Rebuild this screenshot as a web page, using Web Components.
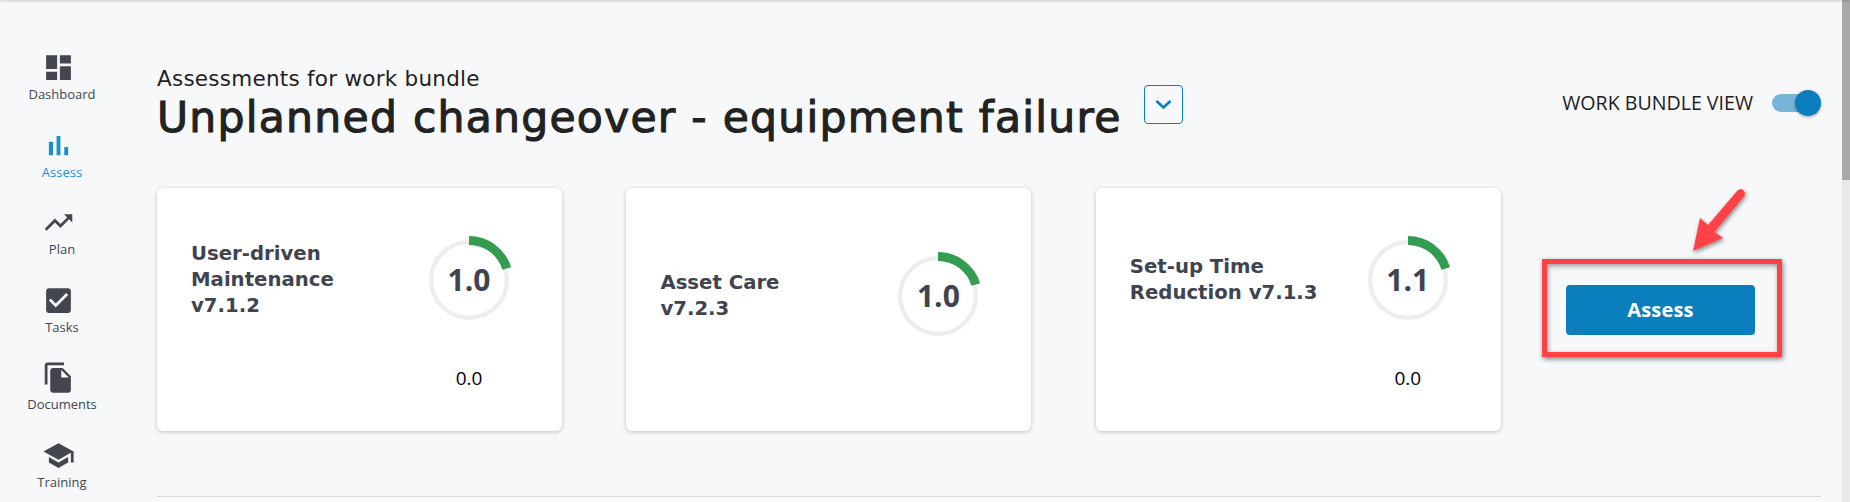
<!doctype html>
<html><head><meta charset="utf-8">
<style>
html,body{margin:0;padding:0;height:502px;overflow:hidden;background:#f7f8fa}
body{font-family:"Open Sans",sans-serif}
app-shell{height:502px}
</style></head>
<body>
<app-shell>
  <side-nav slot="nav">
    <nav-item label="Dashboard"><svg viewBox="0 0 24 24"><path d="M3 13h8V3H3v10zm0 8h8v-6H3v6zm10 0h8V11h-8v10zm0-18v6h8V3h-8z"/></svg></nav-item>
    <nav-item label="Assess" active><svg viewBox="0 0 24 24"><path d="M5 9.2h3V19H5zM10.6 5h2.8v14h-2.8zm5.6 8H19v6h-2.8z"/></svg></nav-item>
    <nav-item label="Plan"><svg viewBox="0 0 24 24"><path d="M16 6l2.29 2.29-4.88 4.88-4-4L2 16.59 3.41 18l6-6 4 4 6.3-6.29L22 12V6z"/></svg></nav-item>
    <nav-item label="Tasks"><svg viewBox="0 0 24 24"><path d="M19 3H5c-1.11 0-2 .9-2 2v14c0 1.1.89 2 2 2h14c1.11 0 2-.9 2-2V5c0-1.1-.89-2-2-2zm-9 14l-5-5 1.41-1.41L10 14.17l7.59-7.59L19 8l-9 9z"/></svg></nav-item>
    <nav-item label="Documents"><svg viewBox="0 0 24 24"><path d="M16 1H4c-1.1 0-2 .9-2 2v14h2V3h12V1zm-1 4l6 6v10c0 1.1-.9 2-2 2H7.99C6.89 23 6 22.1 6 21l.01-14c0-1.1.89-2 1.99-2h7zm-1 7h5.5L14 6.5V12z"/></svg></nav-item>
    <nav-item label="Training"><svg viewBox="0 0 24 24"><path d="M5 13.18v4L12 21l7-3.82v-4L12 17l-7-3.82zM12 3L1 9l11 6 9-4.91V17h2V9L12 3z"/></svg></nav-item>
  </side-nav>
  <page-header slot="main" eyebrow="Assessments for work bundle" heading="Unplanned changeover - equipment failure"></page-header>
  <card-row slot="main">
    <assess-card score="1.0" value="0.0">User-driven<br>Maintenance<br>v7.1.2</assess-card>
    <assess-card score="1.0" no-value>Asset Care<br>v7.2.3</assess-card>
    <assess-card score="1.1" value="0.0">Set-up Time<br>Reduction v7.1.3</assess-card>
    <assess-button>Assess</assess-button>
  </card-row>
  <red-annotation slot="over"></red-annotation>
</app-shell>
<script>
function def(name, css, html, init){
  customElements.define(name, class extends HTMLElement{
    connectedCallback(){
      if(this.shadowRoot) return;
      const r=this.attachShadow({mode:'open'});
      r.innerHTML='<style>'+css+'</style>'+(typeof html==='function'?html(this):html);
      if(init) init(this,r);
    }
  });
}
def('app-shell',`
  :host{display:flex;position:relative;width:1850px;overflow:hidden;background:#f7f8fa}
  .top{position:absolute;left:0;right:0;top:-2px;height:2px;box-shadow:0 1px 3px rgba(0,0,0,.22)}
  .main{flex:1;min-width:0;padding:0 21px 0 0;display:flex;flex-direction:column}
  .bar{width:8px;background:#e9e9e9;display:flex;flex-direction:column}
  .thumb{height:180px;background:#a8a8a8}
`,`<slot name="nav"></slot><div class="main"><slot name="main"></slot><div style="height:1px;background:#d9dadc;margin-top:65px"></div></div>
<div class="bar"><div class="thumb"></div></div><div class="top"></div><slot name="over"></slot>`);
def('side-nav',`:host{display:flex;flex-direction:column;width:157px;flex:none;padding-top:51px;box-sizing:border-box}`,`<slot></slot>`);
def('nav-item',`
  :host{display:flex;flex:none;flex-direction:column;align-items:center;width:124px;height:77.5px;color:#43464f;fill:#43464f}
  :host([active]){color:#1a8fd3;fill:#1a8fd3}
  .i{width:33px;height:33px;margin-right:7px}
  ::slotted(svg){width:33px;height:33px;display:block;fill:inherit}
  .l{font:400 13px/18px "Open Sans",sans-serif;margin-top:1px;white-space:nowrap}
`,h=>`<div class="i"><slot></slot></div><div class="l">${h.getAttribute('label')}</div>`);
def('page-header',`
  :host{display:flex;align-items:flex-start;height:188px;box-sizing:border-box;padding-top:66px;position:relative}
  .e{font:400 21.5px/26px "DejaVu Sans",sans-serif;letter-spacing:.25px;color:#1f1f1f}
  h1{margin:1px 0 0;font:400 42.5px/50px "DejaVu Sans",sans-serif;letter-spacing:1.25px;-webkit-text-stroke:1.1px #222;color:#222;white-space:nowrap}
  .t{flex:none}
  button{flex:none;width:39px;height:39px;margin:19px 0 0 22px;border:1px solid #0b7fbd;border-radius:4px;background:transparent;padding:0;display:flex;align-items:center;justify-content:center}
  svg{width:17px;height:11px;display:block}
  .sp{flex:1}
  toggle-switch{margin-top:24px}
`,h=>`<div class="t"><div class="e">${h.getAttribute('eyebrow')}</div><h1>${h.getAttribute('heading')}</h1></div>
<button aria-label="expand"><svg viewBox="0 0 17 11"><path d="M1.5 2 8.500 8.500 15.500 2" fill="none" stroke="#0b7fbd" stroke-width="2.600"/></svg></button><div class="sp"></div><toggle-switch label="WORK BUNDLE VIEW"></toggle-switch>`);
def('toggle-switch',`
  :host{display:flex;align-items:center;gap:19px;font:400 19.6px/26px "Open Sans",sans-serif;color:#1d1d22}
  .tr{position:relative;width:44px;height:18px;border-radius:9px;background:#77b5d9;margin-right:5px}
  .k{position:absolute;right:-5px;top:-4px;width:26px;height:26px;border-radius:50%;background:#0b7fbd;box-shadow:0 1px 3px rgba(0,0,0,.35)}
`,h=>`<span>${h.getAttribute('label')}</span><div class="tr"><div class="k"></div></div>`);
def('card-row',`:host{display:flex;gap:64.4px;height:243px;align-items:flex-start}`,`<slot></slot>`);
def('assess-card',`
  :host{display:block;flex:none;width:405px;height:243px;box-sizing:border-box;background:#fff;border-radius:6px;box-shadow:0 1px 4px rgba(0,0,0,.22);padding:48px 0 0 34px}
  :host([no-value]){padding-top:64px}
  .row{display:flex;align-items:center}
  .t{width:234px;flex:none;font:700 19.7px/26px "DejaVu Sans",sans-serif;color:#3f4450}
  .v{width:88px;margin:0 0 0 234px;text-align:center;font:400 19px/22px "Open Sans",sans-serif;color:#000;padding-top:43px}
`,h=>`<div class="row"><div class="t"><slot></slot></div><score-ring score="${h.getAttribute('score')}"></score-ring></div>${h.hasAttribute('value')?`<div class="v">${h.getAttribute('value')}</div>`:''}`);
def('score-ring',`
  :host{display:block;position:relative;width:88px;height:88px;flex:none}
  svg{position:absolute;inset:0;width:88px;height:88px}
  .n{position:absolute;inset:0;display:flex;align-items:center;justify-content:center;font:700 30px/1 "Open Sans",sans-serif;color:#3f4450}
`,h=>{const a=73*Math.PI/180,r=39.5,x=44+r*Math.sin(a),y=44-r*Math.cos(a);
return `<svg viewBox="0 0 88 88"><circle cx="44" cy="44" r="37.9" fill="none" stroke="#ededed" stroke-width="4.2"/><path d="M44 4.5A39.5 39.5 0 0 1 ${x} ${y}" fill="none" stroke="#339c50" stroke-width="9"/></svg><div class="n">${h.getAttribute('score')}</div>`});
def('assess-button',`
  :host{display:flex;flex:none;margin:97px 0 0 .8px;width:189px;height:50px;border-radius:4px;background:#0b7fbd;color:#fff;font:700 20px/50px "Open Sans",sans-serif;letter-spacing:.2px;justify-content:center}
`,`<slot></slot>`);
def('red-annotation',`
  :host{position:absolute;left:1500px;top:170px;width:300px;height:200px;pointer-events:none}
  .box{position:absolute;left:42px;top:89px;width:240px;height:98px;box-sizing:border-box;border:5px solid #ff4246;box-shadow:1px 2px 5px rgba(0,0,0,.5),inset 1px 2px 5px rgba(0,0,0,.4)}
  svg{position:absolute;left:0;top:0;width:300px;height:200px;overflow:visible}
`,`<div class="box"></div><svg viewBox="0 0 300 200"><defs><filter id="s" x="-30%" y="-30%" width="170%" height="170%"><feDropShadow dx="1" dy="2" stdDeviation="2.2" flood-color="#000" flood-opacity=".45"/></filter></defs>
<path filter="url(#s)" fill="#ff4246" d="M193 81 200 48 208 55 237 21C239.500 18.500 242 19 243.700 20.500 245.300 22 245.400 24.500 243.500 27L214.500 62 223 68Z"/></svg>`);
</script>
</body></html>
